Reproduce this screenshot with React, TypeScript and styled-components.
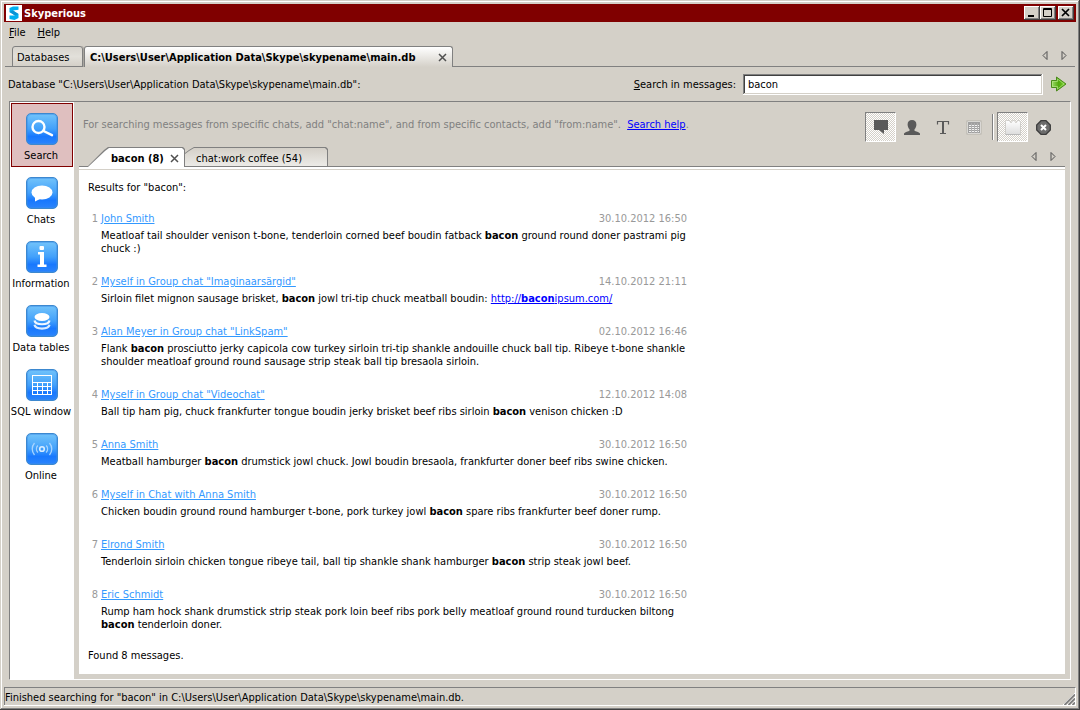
import React from "react";
import styled, { createGlobalStyle, css } from "styled-components";

const face = "#d4d0c8";
const shade = "#808080";
const dark = "#404040";

const GlobalStyle = createGlobalStyle`
  *, *::before, *::after { box-sizing: border-box; }
  body {
    margin: 0;
    background: ${face};
    color: #000;
    font: 11px/13px "DejaVu Sans Condensed", "DejaVu Sans", sans-serif;
  }
  button, input {
    font: inherit;
    color: inherit;
    margin: 0;
    padding: 0;
    border: 0;
    background: none;
    border-radius: 0;
  }
`;

const Window = styled.div`
  min-height: 100vh;
  display: flex;
  flex-direction: column;
  padding: 4px;
  background: ${face};
  box-shadow: inset -1px -1px ${dark}, inset 1px 1px ${face},
    inset -2px -2px ${shade}, inset 2px 2px #fff;
`;

const TitleBar = styled.header`
  display: flex;
  align-items: center;
  height: 18px;
  padding: 0 2px;
  background: #800000;
  color: #fff;
`;

const TitleText = styled.h1`
  flex: 1;
  margin: 0 0 0 2px;
  font-size: 11px;
  line-height: 13px;
  font-weight: 700;
`;

const CaptionButton = styled.button<{ $apart?: boolean }>`
  display: grid;
  place-items: center;
  width: 16px;
  height: 14px;
  margin-left: ${(p) => (p.$apart ? 2 : 0)}px;
  background: ${face};
  box-shadow: inset -1px -1px ${dark}, inset 1px 1px #fff, inset -2px -2px ${shade};
`;

const MenuBar = styled.nav`
  display: flex;
  align-items: center;
  gap: 12px;
  height: 20px;
  padding-left: 5px;
`;

const OuterStrip = styled.div`
  display: flex;
  align-items: flex-end;
  height: 25px;
  margin: 0 1px;
  padding-left: 7px;
  box-shadow: inset 0 -1px ${shade};
`;

const OuterTab = styled.div<{ $active?: boolean }>`
  display: flex;
  align-items: center;
  justify-content: space-between;
  height: 21px;
  border: 1px solid ${shade};
  border-radius: 3px 3px 0 0;
  ${(p) =>
    p.$active
      ? css`
          min-width: 369px;
          padding: 0 5px;
          border-bottom: 0;
          font-weight: 700;
          background: linear-gradient(#fff, ${face});
        `
      : css`
          min-width: 71px;
          margin-right: 1px;
          padding: 2px 4px 0;
          background: linear-gradient(#d8d5ce, #e2e0da 50%, ${face});
          box-shadow: 1px 0 #a9a69f;
        `}
`;

const TabButton = styled.button`
  font-weight: inherit;
  white-space: nowrap;
`;

const IconButton = styled.button`
  display: grid;
  place-items: center;
`;

const Pager = styled.div<{ $inner?: boolean }>`
  display: flex;
  gap: 13px;
  margin-left: auto;
  padding: ${(p) => (p.$inner ? "0 9px 6px 0" : "0 8px 7px 0")};
`;

const SearchRow = styled.form`
  display: flex;
  align-items: center;
  gap: 7px;
  height: 34px;
  padding: 0 9px 0 4px;
`;

const DatabaseName = styled.span`
  flex: 1;
`;

const SearchInput = styled.input`
  width: 300px;
  height: 21px;
  padding: 0 5px;
  background: #fff;
  outline: 0;
  box-shadow: inset -1px -1px #fff, inset 1px 1px ${shade},
    inset -2px -2px ${face}, inset 2px 2px ${dark};
`;

const Panel = styled.div`
  flex: 1;
  display: flex;
  margin: 0 5px;
  border: 1px solid;
  border-color: ${shade} #fff #fff ${shade};
`;

const Sidebar = styled.nav`
  flex: none;
  width: 64px;
  padding: 1px;
  background: #fff;
`;

const SideButton = styled.button<{ $active?: boolean }>`
  display: flex;
  flex-direction: column;
  align-items: center;
  gap: 4px;
  width: 100%;
  height: 64px;
  padding-top: 9px;
  white-space: nowrap;
  border: 1px solid ${(p) => (p.$active ? "#800000" : "transparent")};
  background: ${(p) => (p.$active ? "#dfbfbf" : "transparent")};
`;

const SideLabel = styled.span`
  padding-right: 2px;
`;

const Tile = styled.span`
  display: grid;
  place-items: center;
  flex: none;
  width: 32px;
  height: 32px;
  border: 1px solid #3c88cf;
  border-radius: 5px;
  background: linear-gradient(#72c3fa, #41a0fb 50%, #1878fe 75%, #2a84fc);
  box-shadow: inset 0 0 0 1px rgba(60, 140, 230, 0.45);
`;

const Main = styled.main`
  flex: 1;
  min-width: 0;
  display: flex;
  flex-direction: column;
  padding: 0 5px;
`;

const HintRow = styled.div`
  display: flex;
  align-items: center;
  justify-content: space-between;
  height: 45px;
  padding: 5px 6px 0 4px;
`;

const Hint = styled.p`
  margin: 0;
  color: ${shade};
  padding-bottom: 5px;
`;

const HelpLink = styled.a`
  margin-left: 3px;
  color: #0000ff;
`;

const Tools = styled.div`
  display: flex;
  align-items: center;
`;

const Tool = styled.button<{ $pressed?: boolean }>`
  display: grid;
  place-items: center;
  width: 31px;
  height: 30px;
  ${(p) =>
    p.$pressed &&
    css`
      border: 1px solid;
      border-color: ${shade} #fff #fff ${shade};
      background: repeating-conic-gradient(#fff 0 25%, ${face} 0 50%) 0 0 / 2px 2px;
    `}
`;

const ToolDivider = styled.span`
  width: 2px;
  height: 26px;
  margin: 0 3px;
  border-left: 1px solid ${shade};
  border-right: 1px solid #fff;
`;

const InnerStrip = styled.div`
  display: flex;
  align-items: flex-end;
  height: 20px;
  padding-left: 8px;
  box-shadow: inset 0 -1px ${shade};
`;

const activeShape =
  "polygon(0 100%, 17px 3px, 21px 0, calc(100% - 2px) 0, 100% 2px, 100% 100%)";
const idleShape =
  "polygon(0 100%, 0 6px, 4px 3px, 9px 0, calc(100% - 2px) 0, 100% 2px, 100% 100%)";

const InnerTab = styled.div<{ $active?: boolean }>`
  position: relative;
  z-index: 0;
  display: flex;
  align-items: center;
  justify-content: space-between;
  height: 20px;
  min-width: ${(p) => (p.$active ? 98 : 143)}px;
  padding: ${(p) => (p.$active ? "2px 6px 0 24px" : "2px 6px 0 11px")};
  font-weight: ${(p) => (p.$active ? 700 : 400)};

  &::before,
  &::after {
    content: "";
    position: absolute;
    z-index: -1;
    inset: 0;
    background: ${shade};
    clip-path: ${(p) => (p.$active ? activeShape : idleShape)};
  }
  &::after {
    inset: ${(p) => (p.$active ? "1px 1px 0 1px" : "1px 1px 1px 0")};
    background: ${(p) => (p.$active ? "#fff" : `linear-gradient(${face}, #ecebe7)`)};
  }
`;

const Results = styled.section`
  flex: 1;
  margin-bottom: 5px;
  padding: 14px 9px 0;
  background: linear-gradient(${face}, ${face}) 0 2px / 100% 1px no-repeat #fff;
`;

const Line = styled.p`
  margin: 0;
`;

const ResultList = styled.ol`
  display: flex;
  flex-direction: column;
  gap: 20px;
  max-width: 606px;
  margin: 18px 0;
  padding: 0;
  list-style: none;
`;

const Result = styled.li`
  display: grid;
  grid-template-columns: 10px 1fr auto;
  gap: 4px 3px;
`;

const Ordinal = styled.span`
  color: #999;
  text-align: right;
`;

const Author = styled.a`
  justify-self: start;
  color: #3399ff;
`;

const When = styled.time`
  padding-right: 7px;
  color: #999;
`;

const Message = styled.p`
  grid-column: 2 / -1;
  margin: 0;
`;

const Url = styled.a`
  color: #0000ff;
`;

const StatusBar = styled.footer`
  display: flex;
  justify-content: space-between;
  height: 19px;
  margin-top: 7px;
  padding: 3px 0 0 1px;
  border: 1px solid;
  border-color: ${shade} #fff #fff ${shade};
  border-left-width: 0;
  box-shadow: inset 1px 0 ${shade};
`;

const Grip = styled.svg`
  align-self: flex-end;
  display: block;
`;

function Arrow({ back }: { back?: boolean }) {
  return (
    <svg width="6" height="9" viewBox="0 0 6 9" fill="none" stroke="#505050">
      <path d={back ? "M5 .5v8l-4-4z" : "M1 .5v8l4-4z"} />
    </svg>
  );
}

function TabPager({ inner }: { inner?: boolean }) {
  return (
    <Pager $inner={inner}>
      <IconButton aria-label="Previous tab"><Arrow back /></IconButton>
      <IconButton aria-label="Next tab"><Arrow /></IconButton>
    </Pager>
  );
}

function CloseMark() {
  return (
    <svg width="9" height="9" viewBox="0 0 9 9" stroke="#505050" strokeWidth="1.5" fill="none">
      <path d="M1 1l7 7M8 1L1 8" />
    </svg>
  );
}

const sideItems: { label: string; icon: React.ReactNode }[] = [
  {
    label: "Search",
    icon: (
      <svg width="30" height="30" viewBox="0 0 30 30" fill="none" stroke="#fff">
        <circle cx="11.5" cy="13" r="6" strokeWidth="2.4" />
        <path d="M16.500 17l8.500 4.200" strokeWidth="2.400" strokeLinecap="round" />
      </svg>
    ),
  },
  {
    label: "Chats",
    icon: (
      <svg width="30" height="30" viewBox="0 0 30 30" fill="#fff">
        <ellipse cx="15" cy="14.500" rx="10.500" ry="7" />
        <path d="M8 18v5.500l6-3z" />
      </svg>
    ),
  },
  {
    label: "Information",
    icon: (
      <svg width="30" height="30" viewBox="0 0 30 30" fill="#fff">
        <rect x="12.500" y="4" width="4.500" height="4" rx="1" />
        <path d="M11 10h6v12.500h2.500V25h-9v-2.500h2.500v-10h-2z" />
      </svg>
    ),
  },
  {
    label: "Data tables",
    icon: (
      <svg width="30" height="30" viewBox="0 0 30 30" fill="none">
        <ellipse cx="15" cy="11" rx="7.500" ry="4" fill="#fff" />
        <path d="M7.500 14.500c1 5 14 5 15 0" stroke="#f2f8ff" strokeWidth="2.200" />
        <path d="M7.500 18.800c1 5 14 5 15 0" stroke="#dcedff" strokeWidth="2.200" />
      </svg>
    ),
  },
  {
    label: "SQL window",
    icon: (
      <svg width="30" height="30" viewBox="0 0 30 30" fill="none">
        <rect x="5.500" y="5.500" width="19" height="19" stroke="#fff" />
        <path
          d="M5 12.500h20M5 16.500h20M5 20.500h20M10.500 13v12M15.500 13v12M20.500 13v12"
          stroke="#fff"
        />
      </svg>
    ),
  },
  {
    label: "Online",
    icon: (
      <svg width="30" height="30" viewBox="0 0 30 30" fill="none" stroke="#a8d4ff" strokeWidth="1.300">
        <circle cx="15" cy="15" r="2.300" stroke="#d8ecff" strokeWidth="1.600" />
        <path d="M10.800 11.500c-1.800 2-1.800 5 0 7M19.200 11.500c1.800 2 1.800 5 0 7" />
        <path d="M7.500 9c-3 3.500-3 8.500 0 12M22.500 9c3 3.500 3 8.500 0 12" />
      </svg>
    ),
  },
];

const Hit = () => <b>bacon</b>;

const results: { who: string; when: string; text: React.ReactNode }[] = [
  {
    who: "John Smith",
    when: "30.10.2012 16:50",
    text: <>Meatloaf tail shoulder venison t-bone, tenderloin corned beef boudin fatback <Hit /> ground round doner pastrami pig chuck :)</>,
  },
  {
    who: 'Myself in Group chat "Imaginaarsärgid"',
    when: "14.10.2012 21:11",
    text: <>Sirloin filet mignon sausage brisket, <Hit /> jowl tri-tip chuck meatball boudin: <Url href="http://baconipsum.com/">http://<Hit />ipsum.com/</Url></>,
  },
  {
    who: 'Alan Meyer in Group chat "LinkSpam"',
    when: "02.10.2012 16:46",
    text: <>Flank <Hit /> prosciutto jerky capicola cow turkey sirloin tri-tip shankle andouille chuck ball tip. Ribeye t-bone shankle shoulder meatloaf ground round sausage strip steak ball tip bresaola sirloin.</>,
  },
  {
    who: 'Myself in Group chat "Videochat"',
    when: "12.10.2012 14:08",
    text: <>Ball tip ham pig, chuck frankfurter tongue boudin jerky brisket beef ribs sirloin <Hit /> venison chicken :D</>,
  },
  {
    who: "Anna Smith",
    when: "30.10.2012 16:50",
    text: <>Meatball hamburger <Hit /> drumstick jowl chuck. Jowl boudin bresaola, frankfurter doner beef ribs swine chicken.</>,
  },
  {
    who: "Myself in Chat with Anna Smith",
    when: "30.10.2012 16:50",
    text: <>Chicken boudin ground round hamburger t-bone, pork turkey jowl <Hit /> spare ribs frankfurter beef doner rump.</>,
  },
  {
    who: "Elrond Smith",
    when: "30.10.2012 16:50",
    text: <>Tenderloin sirloin chicken tongue ribeye tail, ball tip shankle shank hamburger <Hit /> strip steak jowl beef.</>,
  },
  {
    who: "Eric Schmidt",
    when: "30.10.2012 16:50",
    text: <>Rump ham hock shank drumstick strip steak pork loin beef ribs pork belly meatloaf ground round turducken biltong <Hit /> tenderloin doner.</>,
  },
];

export default function App() {
  return (
    <Window>
      <GlobalStyle />
      <TitleBar>
        <svg width="16" height="16" viewBox="0 0 16 16">
          <rect width="16" height="16" fill="#fff" />
          <path d="M12.500 1.500H7L3.500 3v4l4 2.500 1.500 1H3.500V14l5 1 4-2V9L8.500 6.500 7 5.500l5.500-.7z" fill="#00aff0" />
          <path d="M3.500 7l4 2.500 1.500 1 3.500-1.500-4-2.500L7 5.500z" fill="#0a93d4" />
        </svg>
        <TitleText>Skyperious</TitleText>
        <CaptionButton aria-label="Minimize">
          <svg width="16" height="14"><path d="M4 9h6v2H4z" /></svg>
        </CaptionButton>
        <CaptionButton aria-label="Maximize">
          <svg width="16" height="14" fill="none" stroke="#000">
            <path d="M3.500 2.500h8v8h-8zM3 3.500h9" />
          </svg>
        </CaptionButton>
        <CaptionButton aria-label="Close" $apart>
          <svg width="16" height="14" stroke="#000" strokeWidth="1.700">
            <path d="M4 3l7 7M11 3l-7 7" />
          </svg>
        </CaptionButton>
      </TitleBar>
      <MenuBar>
        <button><u>F</u>ile</button>
        <button><u>H</u>elp</button>
      </MenuBar>
      <OuterStrip>
        <OuterTab>
          <TabButton>Databases</TabButton>
        </OuterTab>
        <OuterTab $active>
          <TabButton>C:\Users\User\Application Data\Skype\skypename\main.db</TabButton>
          <IconButton aria-label="Close tab"><CloseMark /></IconButton>
        </OuterTab>
        <TabPager />
      </OuterStrip>
      <SearchRow onSubmit={(e) => e.preventDefault()}>
        <DatabaseName>Database "C:\Users\User\Application Data\Skype\skypename\main.db":</DatabaseName>
        <label htmlFor="query"><u>S</u>earch in messages:</label>
        <SearchInput id="query" defaultValue="bacon" />
        <IconButton aria-label="Search">
          <svg width="17" height="16" viewBox="0 0 17 16">
            <defs>
              <linearGradient id="go" x1="0" y1="0" x2="1" y2="0">
                <stop offset="0" stopColor="#9fdc6c" />
                <stop offset=".5" stopColor="#4fa80c" />
                <stop offset="1" stopColor="#86d83c" />
              </linearGradient>
            </defs>
            <path d="M1.500 4.500h5V1l9.500 7-9.500 7v-3.500h-5z" fill="url(#go)" stroke="#4b8a1c" strokeLinejoin="round" />
            <path d="M2.500 5.500h5V3l6.500 5-6.500 5v-2.500h-5z" fill="none" stroke="#b9ea8c" strokeOpacity=".6" />
          </svg>
        </IconButton>
      </SearchRow>
      <Panel>
        <Sidebar>
          {sideItems.map((item, i) => (
            <SideButton key={item.label} $active={i === 0}>
              <Tile>{item.icon}</Tile>
              <SideLabel>{item.label}</SideLabel>
            </SideButton>
          ))}
        </Sidebar>
        <Main>
          <HintRow>
            <Hint>
              For searching messages from specific chats, add "chat:name", and from specific contacts, add "from:name".{" "}
              <HelpLink href="#help">Search help</HelpLink>.
            </Hint>
            <Tools>
              <Tool $pressed aria-label="Search in message text">
                <svg width="16" height="16" viewBox="0 0 16 16" fill="#5a5a5a">
                  <path d="M1 1h14v10h-4v4l-5-4H1z" />
                </svg>
              </Tool>
              <Tool aria-label="Search in contacts">
                <svg width="16" height="16" viewBox="0 0 16 16" fill="#5a5a5a">
                  <path d="M8 1c2.800 0 4.400 1.600 4.400 4.500 0 2.200-.9 3.800-1.900 4.700v1.600c1 .9 4.500 1 5.500 2.700V16H0v-1.500c1-1.700 4.500-1.800 5.500-2.700v-1.600c-1-.9-1.900-2.500-1.900-4.700C3.600 2.600 5.200 1 8 1z" />
                </svg>
              </Tool>
              <Tool aria-label="Search in chat titles">
                <svg width="14" height="14" viewBox="0 0 14 14" fill="none" stroke="#5a5a5a">
                  <path d="M1.500 4.500V1.500h11v3M4 13.500h6" strokeWidth="1.200" />
                  <path d="M7 1v12.500" strokeWidth="2" />
                </svg>
              </Tool>
              <Tool aria-label="Search in tables">
                <svg width="16" height="15" viewBox="0 0 16 15" fill="none">
                  <rect x="1" y="1" width="14" height="13" fill="#fff" stroke="#b4b1aa" />
                  <rect x="2" y="2" width="12" height="11" fill="#a0a0a0" />
                  <path d="M3 5.500h10M3 7.500h10M3 9.500h10M3 11.500h10" stroke="#f2f2f2" />
                  <path d="M5.500 3v10M8.500 3v10M11.500 3v10" stroke="#b0b0b0" />
                </svg>
              </Tool>
              <ToolDivider />
              <Tool $pressed aria-label="New tab for each search">
                <svg width="16" height="15" viewBox="0 0 16 15">
                  <defs>
                    <linearGradient id="tabs" x1="0" y1="0" x2="0" y2="1">
                      <stop offset="0" stopColor="#fff" />
                      <stop offset="1" stopColor="#dcdcdc" />
                    </linearGradient>
                  </defs>
                  <path d="M.5 14.500V1.500L1.500.5h3l1 2h1l1-2h2l1 2h1l1-2h2l1 2v12z" fill="url(#tabs)" stroke="#cfcdc9" />
                  <path d="M.5 14.500h15" stroke="#b8b8b8" />
                </svg>
              </Tool>
              <Tool aria-label="Stop searching">
                <svg width="15" height="15" viewBox="0 0 15 15">
                  <path d="M5 .7h5L14.300 5v5L10 14.300H5L.7 10V5z" fill="#6c6c6c" stroke="#3c3c3c" strokeWidth="1.300" />
                  <path d="M5 5l5 5M10 5l-5 5" stroke="#fff" strokeWidth="2" />
                </svg>
              </Tool>
            </Tools>
          </HintRow>
          <InnerStrip>
            <InnerTab $active>
              <TabButton>bacon (8)</TabButton>
              <IconButton aria-label="Close tab"><CloseMark /></IconButton>
            </InnerTab>
            <InnerTab>
              <TabButton>chat:work coffee (54)</TabButton>
            </InnerTab>
            <TabPager inner />
          </InnerStrip>
          <Results>
            <Line>Results for "bacon":</Line>
            <ResultList>
              {results.map((r, i) => (
                <Result key={i}>
                  <Ordinal>{i + 1}</Ordinal>
                  <Author href={`#message-${i + 1}`}>{r.who}</Author>
                  <When>{r.when}</When>
                  <Message>{r.text}</Message>
                </Result>
              ))}
            </ResultList>
            <Line>Found 8 messages.</Line>
          </Results>
        </Main>
      </Panel>
      <StatusBar>
        Finished searching for "bacon" in C:\Users\User\Application Data\Skype\skypename\main.db.
        <Grip width="12" height="12" viewBox="0 0 12 12">
          <path d="M0 12L12 0M4 12l8-8M8 12l4-4" stroke="#fff" />
          <path d="M1.500 12L12 1.500M5.500 12L12 5.500M9.500 12L12 9.500" stroke="#808080" strokeWidth="1.800" />
        </Grip>
      </StatusBar>
    </Window>
  );
}
